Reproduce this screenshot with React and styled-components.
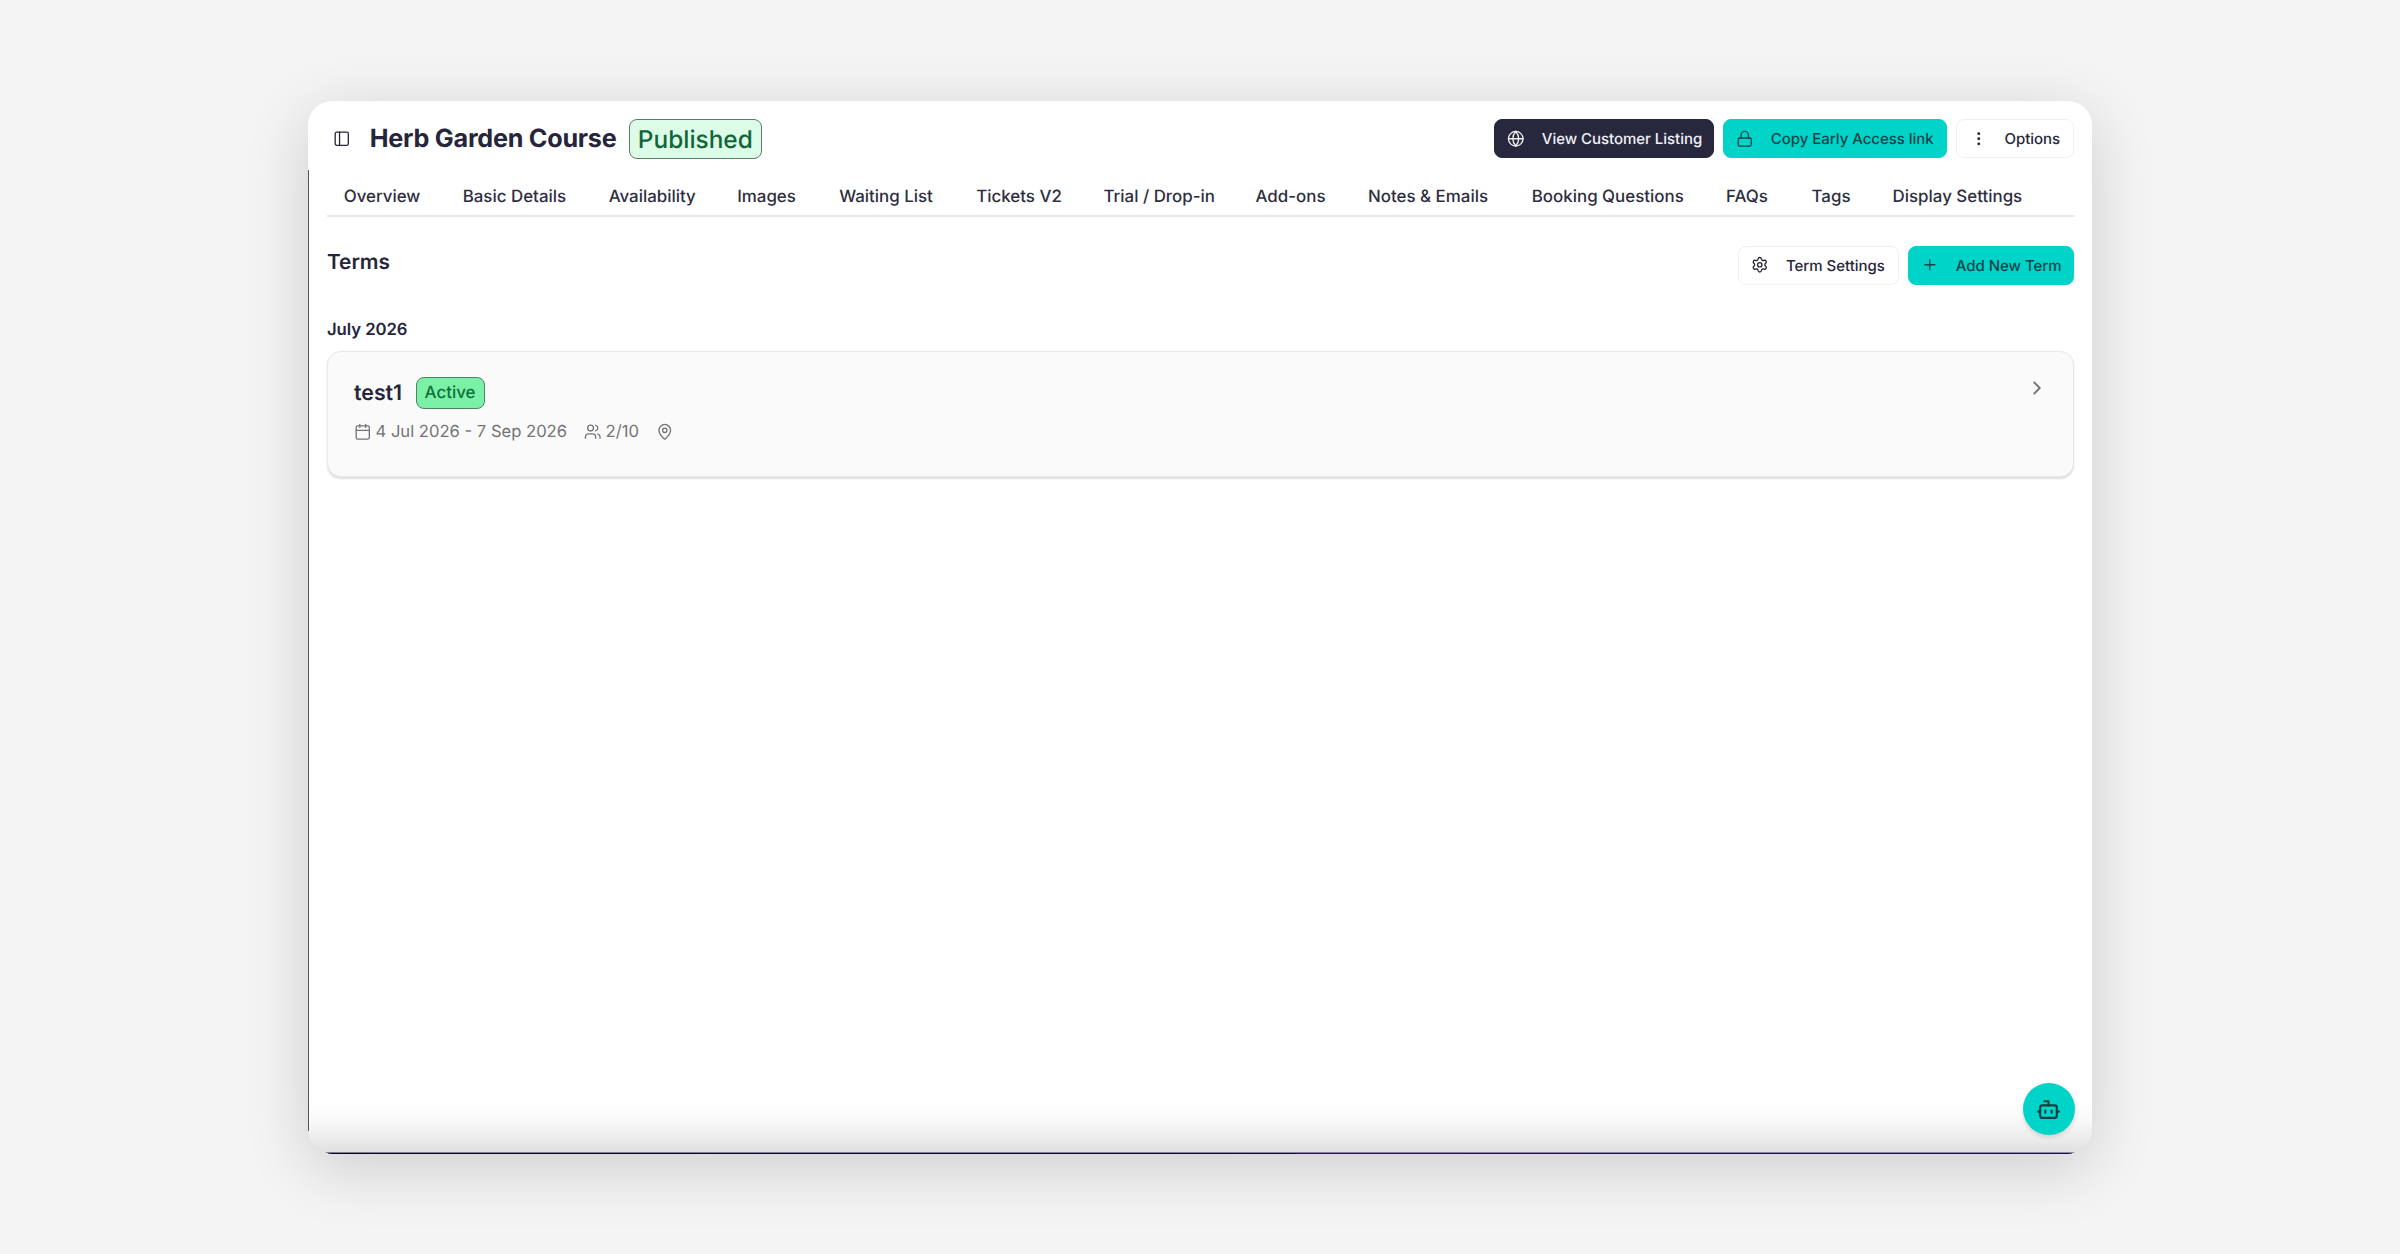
import React from "react";
import styled, { createGlobalStyle } from "styled-components";
import {
  PanelLeft, Globe, Lock, EllipsisVertical, Settings, Plus,
  Calendar, Users, MapPin, ChevronRight, Bot,
} from "lucide-react";

const GlobalStyle = createGlobalStyle`
  *, *::before, *::after { box-sizing: border-box; }
  body {
    margin: 0;
    background: #f4f4f4;
    color: #25253b;
    font-family: Inter, "Liberation Sans", sans-serif;
    text-rendering: geometricPrecision;
    overflow: hidden;
  }
  svg { flex: none; display: block; }
`;

const Stage = styled.div`
  width: 100vw;
  height: 100vh;
  padding: 101px 308px 100px;
  display: flex;
`;

const Window = styled.main`
  position: relative;
  flex: 1;
  display: flex;
  flex-direction: column;
  padding: 18px 18px 0 19px;
  border-radius: 24px;
  background:
    linear-gradient(90deg, #08081f 0, #0c0c33 55.4%, #29124d 55.5%, #1d1145 100%) 20px 100% / 1744px 1px no-repeat,
    linear-gradient(90deg, #7c7c8c, #8d87a6) 18px calc(100% - 1px) / 1748px 1px no-repeat,
    linear-gradient(#555, #555) 0 69px / 1px 961px no-repeat,
    linear-gradient(#fff, #fafafa 33%, #f2f2f2 54%, #ebebeb 73%, #dedede) 0 100% / 100% 52px no-repeat,
    #fff;
  box-shadow: 0 14px 64px rgba(0, 0, 0, 0.155);
`;

const Header = styled.header`
  display: flex;
  align-items: center;
  justify-content: space-between;
  height: 39px;
`;

const TitleGroup = styled.div`
  display: flex;
  align-items: center;
  padding-left: 6.3px;
`;

const Title = styled.h1`
  margin: 0 11px 0 19px;
  padding-top: 2px;
  width: 248px;
  font-size: 25.2px;
  font-weight: 650;
  line-height: 39px;
  letter-spacing: -0.25px;
  white-space: nowrap;
`;

const Badge = styled.span`
  display: inline-flex;
  align-items: center;
  justify-content: center;
  width: ${(p) => (p.$large ? 133 : 69)}px;
  height: ${(p) => (p.$large ? 40 : 32)}px;
  border: 1px solid ${(p) => (p.$large ? "#5c7d6c" : "#4a8565")};
  border-radius: 8px;
  background: ${(p) => (p.$large ? "#dcfce7" : "#7bf1a8")};
  color: ${(p) => (p.$large ? "#12653a" : "#0f7038")};
  font-size: ${(p) => (p.$large ? 24.4 : 16.9)}px;
  font-weight: ${(p) => (p.$large ? 500 : 450)};
`;

const Actions = styled.div`
  display: flex;
  gap: 9px;
`;

const tones = {
  dark: "background: #27273e; color: #f1f1f5; border-color: #27273e;",
  teal: "background: #00d3c7; color: #0f444a; border-color: #00d3c7;",
  plain: "background: #fff; color: #27273a; border-color: #f0f0f1;",
};

const Button = styled.button`
  display: flex;
  align-items: center;
  gap: 17.3px;
  width: ${(p) => p.$width}px;
  height: 39px;
  padding: 0 0 0 ${(p) => p.$inset || 12}px;
  border: 1px solid;
  border-radius: 8px;
  font: 500 15px/1 Inter, "Liberation Sans", sans-serif;
  letter-spacing: -0.03px;
  text-rendering: geometricPrecision;
  white-space: nowrap;
  ${(p) => tones[p.$tone]}
`;

const Tabs = styled.nav`
  display: flex;
  height: 59px;
  padding: 20px 0 0 16.7px;
  border-bottom: 2px solid #e8e8e8;
`;

const Tab = styled.a`
  width: ${(p) => p.$width}px;
  font-size: 16.9px;
  font-weight: 450;
  line-height: 38px;
  white-space: nowrap;
  color: #2e2e40;
`;

const SectionHead = styled.div`
  display: flex;
  justify-content: space-between;
  margin-top: 28.5px;
`;

const SectionTitle = styled.h2`
  margin: 0;
  font-size: 20.8px;
  font-weight: 600;
  line-height: 34px;
`;

const Month = styled.h3`
  margin: 34.5px 0 9.5px;
  font-size: 16.7px;
  font-weight: 600;
  line-height: 22px;
  letter-spacing: -0.05px;
`;

const Card = styled.article`
  display: flex;
  justify-content: space-between;
  height: 126px;
  padding: 25px 25px 0 26px;
  border: 1px solid #e9e9ea;
  border-radius: 14px;
  background: #fafafa;
  box-shadow: 0 1.5px 2px rgba(0, 0, 0, 0.13);
  color: #747474;
`;

const NameRow = styled.div`
  display: flex;
  align-items: center;
  gap: 12.5px;
  height: 32px;
`;

const TermName = styled.span`
  width: 49px;
  padding-top: 1.5px;
  font-size: 21.3px;
  font-weight: 600;
  color: #25253b;
`;

const MetaRow = styled.div`
  display: flex;
  gap: 17px;
  margin-top: 13px;
`;

const Meta = styled.span`
  display: flex;
  align-items: center;
  gap: 4px;
  height: 20px;
  font-size: 16.6px;
  white-space: nowrap;
`;

const Open = styled.span`
  padding-top: 0.5px;
`;

const ChatButton = styled.button`
  position: absolute;
  right: 17.5px;
  bottom: 19px;
  display: grid;
  place-items: center;
  width: 52px;
  height: 52px;
  padding: 0;
  border: 0;
  border-radius: 50%;
  background: #00d3c7;
  color: #0d3f43;
  box-shadow: 0 2px 5px rgba(0, 0, 0, 0.14);
`;

const tabs = [
  ["Overview", 119],
  ["Basic Details", 146],
  ["Availability", 128.5],
  ["Images", 102],
  ["Waiting List", 137],
  ["Tickets V2", 127.3],
  ["Trial / Drop-in", 152],
  ["Add-ons", 112.5],
  ["Notes & Emails", 163.8],
  ["Booking Questions", 194.3],
  ["FAQs", 85.5],
  ["Tags", 81],
  ["Display Settings", 130],
];

export default function App() {
  return (
    <>
      <GlobalStyle />
      <Stage>
        <Window>
          <Header>
            <TitleGroup>
              <PanelLeft size={17.5} strokeWidth={1.8} />
              <Title>Herb Garden Course</Title>
              <Badge $large>Published</Badge>
            </TitleGroup>
            <Actions>
              <Button $tone="dark" $width={220}>
                <Globe size={17.5} strokeWidth={1.8} />View Customer Listing
              </Button>
              <Button $tone="teal" $width={224}>
                <Lock size={17.5} strokeWidth={1.8} />Copy Early Access link
              </Button>
              <Button $tone="plain" $width={118} $inset={12.7}>
                <EllipsisVertical size={17.5} />Options
              </Button>
            </Actions>
          </Header>
          <Tabs>
            {tabs.map(([label, width]) => <Tab key={label} $width={width}>{label}</Tab>)}
          </Tabs>
          <SectionHead>
            <SectionTitle>Terms</SectionTitle>
            <Actions>
              <Button $tone="plain" $width={161.5} $inset={12.7}>
                <Settings size={17.5} strokeWidth={1.8} />Term Settings
              </Button>
              <Button $tone="teal" $width={166}>
                <Plus size={17.5} strokeWidth={1.8} />Add New Term
              </Button>
            </Actions>
          </SectionHead>
          <Month>July 2026</Month>
          <Card>
            <div>
              <NameRow>
                <TermName>test1</TermName>
                <Badge>Active</Badge>
              </NameRow>
              <MetaRow>
                <Meta><Calendar size={17.5} strokeWidth={1.8} />4 Jul 2026 - 7 Sep 2026</Meta>
                <Meta><Users size={17.5} strokeWidth={1.8} />2/10</Meta>
                <Meta><MapPin size={17.5} strokeWidth={1.8} /></Meta>
              </MetaRow>
            </div>
            <Open><ChevronRight size={22} /></Open>
          </Card>
          <ChatButton aria-label="Chat"><Bot size={25} /></ChatButton>
        </Window>
      </Stage>
    </>
  );
}
